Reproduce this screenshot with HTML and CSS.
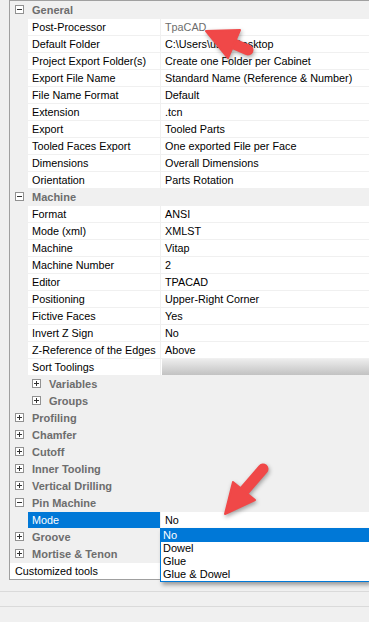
FILE: index.html
```html
<!DOCTYPE html>
<html lang="en">
	<head>
		<meta charset="utf-8" />
		<title>Post-Processor settings</title>
		<meta name="viewport" content="width=device-width, initial-scale=1.0" />
		<link rel="stylesheet" href="styles.css">
	</head>

	<body>
		<div class="grid">
			<div class="cat"><svg class="tog" viewBox="0 0 9 9"><rect x="0.5" y="0.5" width="8" height="8" /><path d="M2 4.5h5" /></svg>General</div>
			<div class="prop"><span class="name">Post-Processor</span><span class="val readonly">TpaCAD</span></div>
			<div class="prop"><span class="name">Default Folder</span><span class="val">C:\Users\user\Desktop</span></div>
			<div class="prop"><span class="name">Project Export Folder(s)</span><span class="val">Create one Folder per Cabinet</span></div>
			<div class="prop"><span class="name">Export File Name</span><span class="val">Standard Name (Reference &amp; Number)</span></div>
			<div class="prop"><span class="name">File Name Format</span><span class="val">Default</span></div>
			<div class="prop"><span class="name">Extension</span><span class="val">.tcn</span></div>
			<div class="prop"><span class="name">Export</span><span class="val">Tooled Parts</span></div>
			<div class="prop"><span class="name">Tooled Faces Export</span><span class="val">One exported File per Face</span></div>
			<div class="prop"><span class="name">Dimensions</span><span class="val">Overall Dimensions</span></div>
			<div class="prop"><span class="name">Orientation</span><span class="val">Parts Rotation</span></div>

			<div class="cat"><svg class="tog" viewBox="0 0 9 9"><rect x="0.5" y="0.5" width="8" height="8" /><path d="M2 4.5h5" /></svg>Machine</div>
			<div class="prop"><span class="name">Format</span><span class="val">ANSI</span></div>
			<div class="prop"><span class="name">Mode (xml)</span><span class="val">XMLST</span></div>
			<div class="prop"><span class="name">Machine</span><span class="val">Vitap</span></div>
			<div class="prop"><span class="name">Machine Number</span><span class="val">2</span></div>
			<div class="prop"><span class="name">Editor</span><span class="val">TPACAD</span></div>
			<div class="prop"><span class="name">Positioning</span><span class="val">Upper-Right Corner</span></div>
			<div class="prop"><span class="name">Fictive Faces</span><span class="val">Yes</span></div>
			<div class="prop"><span class="name">Invert Z Sign</span><span class="val">No</span></div>
			<div class="prop"><span class="name">Z-Reference of the Edges</span><span class="val">Above</span></div>
			<div class="prop"><span class="name">Sort Toolings</span><span class="val"><span class="btn"></span></span></div>
			<div class="cat sub"><svg class="tog" viewBox="0 0 9 9"><rect x="0.5" y="0.5" width="8" height="8" /><path d="M2 4.5h5M4.5 2v5" /></svg>Variables</div>
			<div class="cat sub"><svg class="tog" viewBox="0 0 9 9"><rect x="0.5" y="0.5" width="8" height="8" /><path d="M2 4.5h5M4.5 2v5" /></svg>Groups</div>

			<div class="cat"><svg class="tog" viewBox="0 0 9 9"><rect x="0.5" y="0.5" width="8" height="8" /><path d="M2 4.5h5M4.5 2v5" /></svg>Profiling</div>
			<div class="cat"><svg class="tog" viewBox="0 0 9 9"><rect x="0.5" y="0.5" width="8" height="8" /><path d="M2 4.5h5M4.5 2v5" /></svg>Chamfer</div>
			<div class="cat"><svg class="tog" viewBox="0 0 9 9"><rect x="0.5" y="0.5" width="8" height="8" /><path d="M2 4.5h5M4.5 2v5" /></svg>Cutoff</div>
			<div class="cat"><svg class="tog" viewBox="0 0 9 9"><rect x="0.5" y="0.5" width="8" height="8" /><path d="M2 4.5h5M4.5 2v5" /></svg>Inner Tooling</div>
			<div class="cat"><svg class="tog" viewBox="0 0 9 9"><rect x="0.5" y="0.5" width="8" height="8" /><path d="M2 4.5h5M4.5 2v5" /></svg>Vertical Drilling</div>
			<div class="cat"><svg class="tog" viewBox="0 0 9 9"><rect x="0.5" y="0.5" width="8" height="8" /><path d="M2 4.5h5" /></svg>Pin Machine</div>
			<div class="prop sel"><span class="name">Mode</span><span class="val">No</span></div>
			<div class="cat"><svg class="tog" viewBox="0 0 9 9"><rect x="0.5" y="0.5" width="8" height="8" /><path d="M2 4.5h5M4.5 2v5" /></svg>Groove</div>
			<div class="cat"><svg class="tog" viewBox="0 0 9 9"><rect x="0.5" y="0.5" width="8" height="8" /><path d="M2 4.5h5M4.5 2v5" /></svg>Mortise &amp; Tenon</div>
			<div class="prop top"><span class="name">Customized tools</span><span class="val"></span></div>

			<ul class="dropdown">
				<li class="on">No</li>
				<li>Dowel</li>
				<li>Glue</li>
				<li>Glue &amp; Dowel</li>
			</ul>
		</div>

		<div class="status"></div>

		<!-- annotation arrows drawn over the screenshot -->
		<svg class="arrows" width="369" height="622" viewBox="0 0 369 622">
			<g fill="#f04848" stroke="#f04848">
				<path d="M234 44L248 50" stroke-width="11" stroke-linecap="round" />
				<polygon points="206,31 240,30 228,58" stroke-width="2" stroke-linejoin="round" />
				<path d="M244 491L263 469" stroke-width="11" stroke-linecap="round" />
				<polygon points="225,514 255,500 233,482" stroke-width="2" stroke-linejoin="round" />
			</g>
		</svg>
	</body>
</html>
```

FILE: styles.css
```css
body {
  margin: 0;
  height: 622px;
  overflow: hidden;
  position: relative;
  background: #f0f0f0;
  font-family: "Liberation Sans", Arial, sans-serif;
  font-size: 10.8px;
  color: #000;
}

.grid {
  position: relative;
  margin-left: 9px;
  border: 1px solid #a0a0a0;
  border-right: none;
  background: #f0f0f0;
}

.cat {
  height: 17px;
  display: flex;
  align-items: center;
  padding-left: 5px;
  font-weight: bold;
  font-size: 11px;
  color: #6d6d6d;
  white-space: nowrap;
}
.cat.sub {
  padding-left: 22px;
}
.tog {
  width: 9px;
  height: 9px;
  margin-right: 8px;
  flex: none;
}
.tog rect {
  fill: #fff;
  stroke: #919191;
}
.tog path {
  stroke: #333;
  stroke-width: 1;
  fill: none;
}

.prop {
  height: 17px;
  box-sizing: border-box;
  display: flex;
  padding-left: 18px;
  border-top: 1px solid #f0f0f0;
  white-space: nowrap;
}
.prop .name {
  width: 132px;
  box-sizing: border-box;
  padding-left: 4px;
  background: #fff;
  line-height: 16px;
  overflow: hidden;
}
.prop .val {
  flex: 1;
  min-width: 0;
  margin-left: 1px;
  padding-left: 4px;
  background: #fff;
  line-height: 16px;
  overflow: hidden;
}
.prop .readonly {
  color: #6d6d6d;
}
.prop.top {
  padding-left: 0;
}
.prop.top .name {
  width: 150px;
  padding-left: 5px;
}
.prop.sel .name {
  background: #0078d7;
  color: #fff;
}

.btn {
  display: block;
  height: 16px;
  margin-left: -3px;
  background: linear-gradient(#ededed, #c2c2c2);
}

.dropdown {
  position: absolute;
  left: 150px;
  top: 527px;
  right: 0;
  margin: 0;
  padding: 0;
  list-style: none;
  background: #fff;
  border: 1px solid #0078d7;
  border-right: none;
  box-shadow: 2px 3px 4px rgba(0, 0, 0, 0.35);
}
.dropdown li {
  height: 13px;
  line-height: 13px;
  padding-left: 2px;
  font-size: 11px;
}
.dropdown li.on {
  background: #0078d7;
  color: #fff;
}

.status {
  margin-top: 11px;
  height: 14px;
  border-top: 1px solid #dadada;
  border-bottom: 1px solid #dadada;
}

.arrows {
  position: absolute;
  left: 0;
  top: 0;
  pointer-events: none;
  filter: drop-shadow(1px 2px 2px rgba(0, 0, 0, 0.35));
}
```
